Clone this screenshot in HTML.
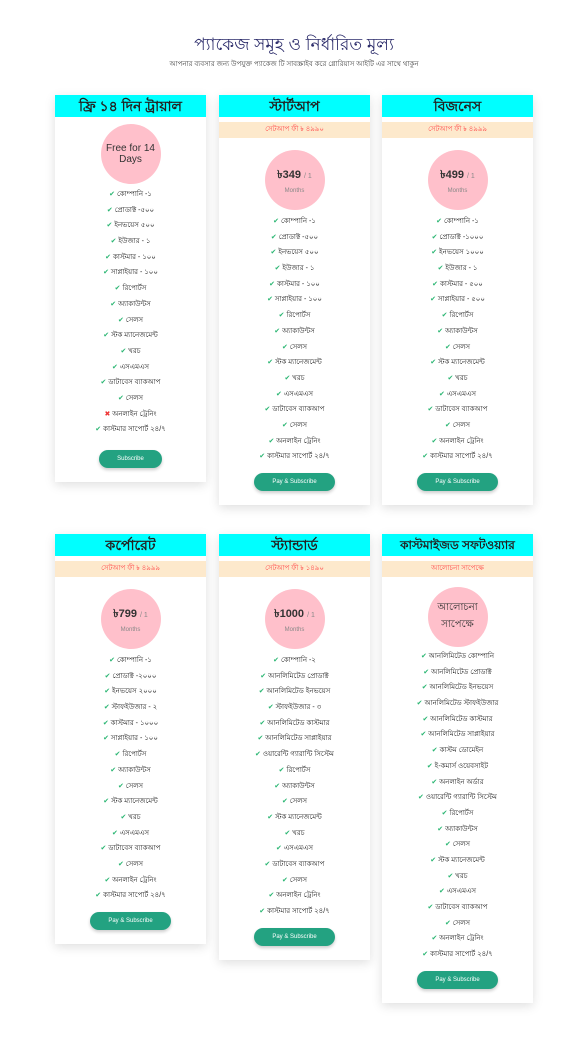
<!DOCTYPE html>
<html><head><meta charset="utf-8"><style>
body{margin:0;width:588px;height:1044px;background:#fff;font-family:"Liberation Sans","Noto Sans CJK SC",sans-serif;position:relative;overflow:hidden}
h1{position:absolute;top:32px;left:0;width:588px;text-align:center;margin:0;font-size:17px;font-weight:normal;color:#2d2d6b}
.sub{position:absolute;top:58px;left:0;width:588px;text-align:center;font-size:7px;color:#444}
.card{position:absolute;width:151px;background:#fff;box-shadow:0 3px 10px rgba(0,0,0,.13);text-align:center}
.hd{background:#00ffff;height:22px;line-height:22px;font-size:14px;font-weight:bold;color:#222}
.band{margin-top:5px;background:#fde9cc;height:16px;line-height:16px;font-size:7px;color:#ff4d4d}
.circ{width:60px;height:60px;border-radius:50%;background:#ffc0cb;margin:12px auto 0;display:flex;flex-direction:column;align-items:center;justify-content:center;color:#333}
.circ b{font-size:11px}.circ b span{font-weight:normal;color:#888;font-size:7px}
.circ i{font-style:normal;font-size:6px;color:#888;margin-top:3px}
ul{list-style:none;margin:4px 0 0;padding:0}
li{height:15.7px;line-height:15.7px;font-size:7px;color:#222}
li:before{content:"✔ ";color:#2bb673;font-size:7px}
li.x:before{content:"✖ ";color:#e33}
.btn{display:inline-block;margin:8px 0 14px;background:#23a281;color:#fff;font-size:6px;height:18px;line-height:18px;border-radius:9px;padding:0 18px;box-shadow:0 2px 3px rgba(0,0,0,.2)}
</style></head><body>
<h1>প্যাকেজ সমূহ ও নির্ধারিত মূল্য</h1>
<div class="sub">আপনার ব্যবসার জন্য উপযুক্ত প্যাকেজ টি সাবস্ক্রাইব করে গ্লোরিয়াস আইটি এর সাথে থাকুন</div>

<div class="card" style="left:55px;top:95px">
<div class="hd">ফ্রি ১৪ দিন ট্রায়াল</div>
<div class="circ" style="margin-top:7px;font-size:10px">Free for 14<br>Days</div>
<ul style="margin-top:3px"><li>কোম্পানি -১</li><li>প্রোডাক্ট -৫০০</li><li>ইনভয়েস ৫০০</li><li>ইউজার - ১</li><li>কাস্টমার - ১০০</li><li>সাপ্লাইয়ার - ১০০</li><li>রিপোর্টস</li><li>অ্যাকাউন্টস</li><li>সেলস</li><li>স্টক ম্যানেজমেন্ট</li><li>খরচ</li><li>এসএমএস</li><li>ডাটাবেস ব্যাকআপ</li><li>সেলস</li><li class="x">অনলাইন ট্রেনিং</li><li>কাস্টমার সাপোর্ট ২৪/৭</li></ul>
<div class="btn" style="margin-top:12px">Subscribe</div>
</div>

<div class="card" style="left:219px;top:95px">
<div class="hd">স্টার্টআপ</div><div class="band">সেটআপ ফী ৳ ৪৯৯০</div>
<div class="circ"><b>৳349 <span>/ 1</span></b><i>Months</i></div>
<ul><li>কোম্পানি -১</li><li>প্রোডাক্ট -৫০০</li><li>ইনভয়েস ৫০০</li><li>ইউজার - ১</li><li>কাস্টমার - ১০০</li><li>সাপ্লাইয়ার - ১০০</li><li>রিপোর্টস</li><li>অ্যাকাউন্টস</li><li>সেলস</li><li>স্টক ম্যানেজমেন্ট</li><li>খরচ</li><li>এসএমএস</li><li>ডাটাবেস ব্যাকআপ</li><li>সেলস</li><li>অনলাইন ট্রেনিং</li><li>কাস্টমার সাপোর্ট ২৪/৭</li></ul>
<div class="btn">Pay &amp; Subscribe</div>
</div>

<div class="card" style="left:382px;top:95px">
<div class="hd">বিজনেস</div><div class="band">সেটআপ ফী ৳ ৪৯৯৯</div>
<div class="circ"><b>৳499 <span>/ 1</span></b><i>Months</i></div>
<ul><li>কোম্পানি -১</li><li>প্রোডাক্ট -১০০০</li><li>ইনভয়েস ১০০০</li><li>ইউজার - ১</li><li>কাস্টমার - ৫০০</li><li>সাপ্লাইয়ার - ৫০০</li><li>রিপোর্টস</li><li>অ্যাকাউন্টস</li><li>সেলস</li><li>স্টক ম্যানেজমেন্ট</li><li>খরচ</li><li>এসএমএস</li><li>ডাটাবেস ব্যাকআপ</li><li>সেলস</li><li>অনলাইন ট্রেনিং</li><li>কাস্টমার সাপোর্ট ২৪/৭</li></ul>
<div class="btn">Pay &amp; Subscribe</div>
</div>

<div class="card" style="left:55px;top:534px">
<div class="hd">কর্পোরেট</div><div class="band">সেটআপ ফী ৳ ৪৯৯৯</div>
<div class="circ"><b>৳799 <span>/ 1</span></b><i>Months</i></div>
<ul><li>কোম্পানি -১</li><li>প্রোডাক্ট -২০০০</li><li>ইনভয়েস ২০০০</li><li>স্টাফইউজার - ২</li><li>কাস্টমার - ১০০০</li><li>সাপ্লাইয়ার - ১০০</li><li>রিপোর্টস</li><li>অ্যাকাউন্টস</li><li>সেলস</li><li>স্টক ম্যানেজমেন্ট</li><li>খরচ</li><li>এসএমএস</li><li>ডাটাবেস ব্যাকআপ</li><li>সেলস</li><li>অনলাইন ট্রেনিং</li><li>কাস্টমার সাপোর্ট ২৪/৭</li></ul>
<div class="btn">Pay &amp; Subscribe</div>
</div>

<div class="card" style="left:219px;top:534px">
<div class="hd">স্ট্যান্ডার্ড</div><div class="band">সেটআপ ফী ৳ ১৪৯০</div>
<div class="circ"><b>৳1000 <span>/ 1</span></b><i>Months</i></div>
<ul><li>কোম্পানি -২</li><li>আনলিমিটেড প্রোডাক্ট</li><li>আনলিমিটেড ইনভয়েস</li><li>স্টাফইউজার - ৩</li><li>আনলিমিটেড কাস্টমার</li><li>আনলিমিটেড সাপ্লাইয়ার</li><li>ওয়ারেন্টি গ্যারান্টি সিস্টেম</li><li>রিপোর্টস</li><li>অ্যাকাউন্টস</li><li>সেলস</li><li>স্টক ম্যানেজমেন্ট</li><li>খরচ</li><li>এসএমএস</li><li>ডাটাবেস ব্যাকআপ</li><li>সেলস</li><li>অনলাইন ট্রেনিং</li><li>কাস্টমার সাপোর্ট ২৪/৭</li></ul>
<div class="btn">Pay &amp; Subscribe</div>
</div>

<div class="card" style="left:382px;top:534px">
<div class="hd" style="font-size:12px">কাস্টমাইজড সফটওয়্যার</div><div class="band">আলোচনা সাপেক্ষে</div>
<div class="circ" style="font-size:10px;margin-top:10px">আলোচনা<br>সাপেক্ষে</div>
<ul style="margin-top:2px"><li>আনলিমিটেড কোম্পানি</li><li>আনলিমিটেড প্রোডাক্ট</li><li>আনলিমিটেড ইনভয়েস</li><li>আনলিমিটেড স্টাফইউজার</li><li>আনলিমিটেড কাস্টমার</li><li>আনলিমিটেড সাপ্লাইয়ার</li><li>কাস্টম ডোমেইন</li><li>ই-কমার্স ওয়েবসাইট</li><li>অনলাইন অর্ডার</li><li>ওয়ারেন্টি গ্যারান্টি সিস্টেম</li><li>রিপোর্টস</li><li>অ্যাকাউন্টস</li><li>সেলস</li><li>স্টক ম্যানেজমেন্ট</li><li>খরচ</li><li>এসএমএস</li><li>ডাটাবেস ব্যাকআপ</li><li>সেলস</li><li>অনলাইন ট্রেনিং</li><li>কাস্টমার সাপোর্ট ২৪/৭</li></ul>
<div class="btn">Pay &amp; Subscribe</div>
</div>
</body></html>
